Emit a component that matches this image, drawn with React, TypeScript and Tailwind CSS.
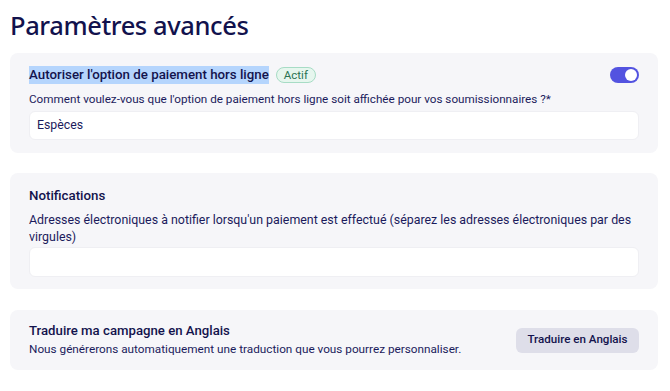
import React from 'react'

function Toggle() {
  return (
    <div className="flex h-[16px] w-[29px] items-center justify-end rounded-full bg-[#5353e0] px-[2px]">
      <div className="h-[12px] w-[12px] rounded-full bg-white" />
    </div>
  )
}

function Card({ children, className = '' }: { children: React.ReactNode; className?: string }) {
  return <div className={`rounded-[8px] bg-[#f6f6f9] px-[19px] ${className}`}>{children}</div>
}

export default function App() {
  return (
    <div className="min-h-[391px] bg-white pl-[10px] pr-[12px] font-['Roboto',sans-serif] text-[#1b1b5c]">
      <h1 className="pt-[8px] text-[25.5px] leading-[34px] font-medium tracking-[-0.4px] text-[#12124d] font-['Noto_Sans',sans-serif]">
        Paramètres avancés
      </h1>

      <Card className="mt-[11px] pt-[14px] pb-[13px]">
        <div className="flex h-[16px] items-center justify-between">
          <div className="flex items-center gap-[7px]">
            <span className="bg-[#b5d5fd] text-[13.3px] leading-[18px] font-medium text-[#13134d]">
              Autoriser l'option de paiement hors ligne
            </span>
            <span className="rounded-full border border-[#a7dcc5] bg-[#e6f6ee] px-[7px] text-[11.5px] leading-[14px] text-[#2a7352]">
              Actif
            </span>
          </div>
          <Toggle />
        </div>
        <p className="mt-[8px] text-[11.7px] leading-[17px]">
          Comment voulez-vous que l'option de paiement hors ligne soit affichée pour vos soumissionnaires ?*
        </p>
        <div className="mt-[3px] flex h-[29px] items-center rounded-[6px] border border-[#efeff3] bg-white px-[7px] text-[12.3px]">
          Espèces
        </div>
      </Card>

      <Card className="mt-[20px] pt-[14px] pb-[12px]">
        <h2 className="text-[13.3px] leading-[18px] font-medium text-[#13134d]">Notifications</h2>
        <p className="mt-[6px] text-[12.4px] leading-[17px]">
          Adresses électroniques à notifier lorsqu'un paiement est effectué (séparez les adresses électroniques par des virgules)
        </p>
        <div className="mt-[2px] h-[30px] rounded-[6px] border border-[#efeff3] bg-white" />
      </Card>

      <Card className="mt-[21px] flex h-[60px] items-center justify-between">
        <div>
          <h2 className="text-[13.2px] leading-[18px] font-medium text-[#13134d]">Traduire ma campagne en Anglais</h2>
          <p className="text-[11.75px] leading-[18px]">
            Nous générerons automatiquement une traduction que vous pourrez personnaliser.
          </p>
        </div>
        <button className="h-[25px] w-[123px] rounded-[6px] bg-[#dedee9] text-[11.6px] font-medium text-[#13134d]">
          Traduire en Anglais
        </button>
      </Card>
    </div>
  )
}
